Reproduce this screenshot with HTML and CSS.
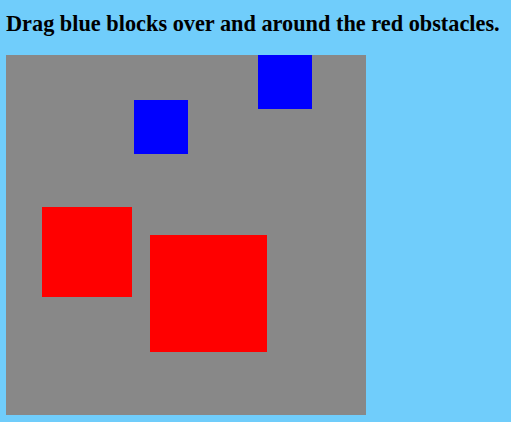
FILE: index.html
```html
<!DOCTYPE html>
<html>
<head>
<meta charset="utf-8">
<link rel="stylesheet" href="styles.css">
</head>
<body>
<h3 class="title">Drag blue blocks over and around the red obstacles.</h3>
<div class="canvas">
  <div class="block blue" style="left:128px;top:45px"></div>
  <div class="block blue" style="left:252px;top:0px"></div>
  <div class="obstacle red small" style="left:36px;top:152px"></div>
  <div class="obstacle red large" style="left:144px;top:180px"></div>
</div>
</body>
</html>
```

FILE: styles.css
```css
html, body {
  background: #70cdfb;
}
body {
  margin: 0;
  padding: 0 6px;
  font-family: "Liberation Serif", "Times New Roman", serif;
}
.title {
  margin: 0;
  padding-top: 13px;
  height: 55px;
  box-sizing: border-box;
  font-size: 22.3px;
  line-height: 22px;
  font-weight: bold;
  color: #000;
  white-space: nowrap;
}
.canvas {
  position: relative;
  width: 360px;
  height: 360px;
  background: #888888;
}
.block {
  position: absolute;
  width: 54px;
  height: 54px;
}
.blue {
  background: #0000ff;
}
.obstacle {
  position: absolute;
}
.red {
  background: #ff0000;
}
.small {
  width: 90px;
  height: 90px;
}
.large {
  width: 117px;
  height: 117px;
}
```
